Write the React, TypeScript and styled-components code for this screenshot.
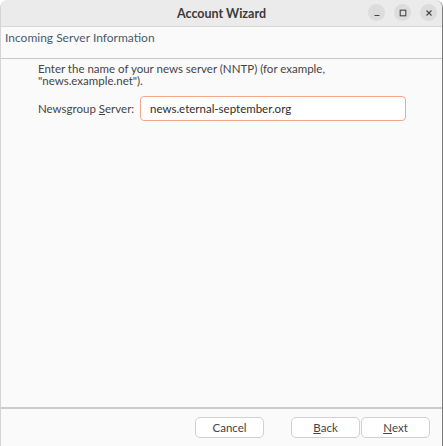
import * as React from "react"
import styled, { createGlobalStyle } from "styled-components"

const GlobalStyle = createGlobalStyle`
  html, body {
    margin: 0;
    padding: 0;
    background: #ffffff;
  }
  body {
    font-family: Lato, "Noto Sans", sans-serif;
    font-size: 12px;
    color: #3d3d3d;
  }
`

const App = () => {
  return (
    <>
      <GlobalStyle />
      <Window>
        <TitleBar>
          <Title>Account Wizard</Title>
          <Controls>
            <ControlButton aria-label="minimize">
              <svg width="10" height="10" viewBox="0 0 10 10">
                <path d="M2.5 7.5h5" stroke="#444" strokeWidth="1.1" />
              </svg>
            </ControlButton>
            <ControlButton aria-label="maximize">
              <svg width="10" height="10" viewBox="0 0 10 10">
                <rect x="2.2" y="2.2" width="5.6" height="5.6" fill="none" stroke="#444" strokeWidth="1.1" />
              </svg>
            </ControlButton>
            <ControlButton aria-label="close">
              <svg width="10" height="10" viewBox="0 0 10 10">
                <path d="M2.5 2.5l5 5M7.5 2.5l-5 5" stroke="#444" strokeWidth="1.1" />
              </svg>
            </ControlButton>
          </Controls>
        </TitleBar>
        <PageHeader>Incoming Server Information</PageHeader>
        <Content>
          <Description>
            Enter the name of your news server (NNTP) (for example,
            <br />
            "news.example.net").
          </Description>
          <FieldRow>
            <Label>
              Newsgroup <u>S</u>erver:
            </Label>
            <TextInput defaultValue="news.eternal-september.org" />
          </FieldRow>
        </Content>
        <Footer>
          <Button>Cancel</Button>
          <NavGroup>
            <Button>
              <u>B</u>ack
            </Button>
            <Button>
              <u>N</u>ext
            </Button>
          </NavGroup>
        </Footer>
      </Window>
    </>
  )
}

export default App

const Window = styled.div`
  width: 443px;
  height: 446px;
  box-sizing: border-box;
  display: flex;
  flex-direction: column;
  background: #fafafa;
  border-left: 1px solid #d4d4d4;
  border-right: 1px solid #7a7a7a;
  border-top-left-radius: 8px;
  border-top-right-radius: 8px;
  overflow: hidden;
`

const TitleBar = styled.div`
  position: relative;
  height: 26px;
  flex-shrink: 0;
  background: #ebebeb;
  border-bottom: 1px solid #d8d8d8;
  display: flex;
  align-items: center;
  justify-content: center;
`

const Title = styled.div`
  font-weight: bold;
  font-size: 12.5px;
  color: #3a3a3a;
`

const Controls = styled.div`
  position: absolute;
  right: 5px;
  top: 4px;
  display: flex;
  gap: 9px;
`

const ControlButton = styled.div`
  width: 17px;
  height: 17px;
  border-radius: 50%;
  background: #dcdcdc;
  display: flex;
  align-items: center;
  justify-content: center;
`

const PageHeader = styled.div`
  height: 32px;
  flex-shrink: 0;
  box-sizing: border-box;
  padding: 3px 0 0 4px;
  line-height: 16px;
  font-size: 12px;
  color: #4a5a6e;
  background: #fafafa;
  border-bottom: 1px solid #c8c8c8;
`

const Content = styled.div`
  flex: 1;
  padding: 4px 20px 0 37px;
  display: flex;
  flex-direction: column;
  gap: 9px;
  border-bottom: 2px solid #cbcbcb;
`

const Description = styled.p`
  margin: 0;
  font-size: 11.5px;
  line-height: 12px;
  color: #454545;
`

const FieldRow = styled.div`
  display: flex;
  align-items: center;
  gap: 7px;
`

const Label = styled.span`
  font-size: 11.5px;
  color: #454545;
  width: 95px;
  flex-shrink: 0;
  white-space: nowrap;
`

const TextInput = styled.input`
  width: 266px;
  height: 25px;
  box-sizing: border-box;
  border: 1.5px solid #f0a88c;
  border-radius: 4px;
  background: #ffffff;
  padding: 0 9px;
  font-family: Lato, "Noto Sans", sans-serif;
  font-size: 11.5px;
  color: #2e2e2e;
  outline: none;
`

const Footer = styled.div`
  height: 37px;
  flex-shrink: 0;
  display: flex;
  align-items: center;
  justify-content: flex-end;
  gap: 27px;
  padding: 0 12px 0 0;
`

const NavGroup = styled.div`
  display: flex;
  gap: 1px;
`

const Button = styled.div`
  width: 69px;
  height: 21px;
  box-sizing: border-box;
  border: 1px solid #d0d0d0;
  border-radius: 5px;
  background: #ffffff;
  display: flex;
  align-items: center;
  justify-content: center;
  font-size: 11.5px;
  color: #444;
`
